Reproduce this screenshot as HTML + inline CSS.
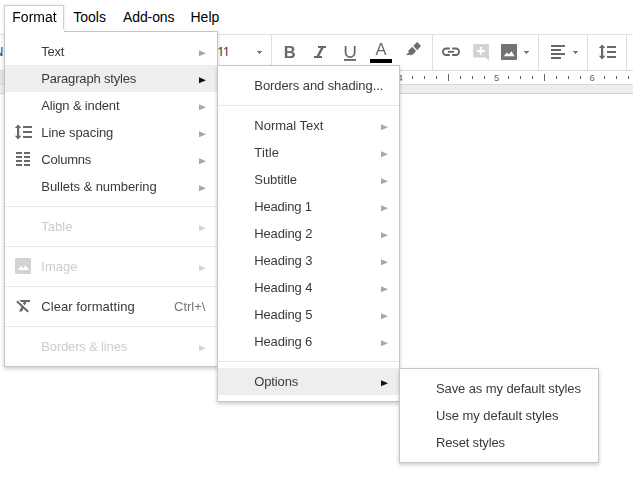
<!DOCTYPE html>
<html>
<head>
<meta charset="utf-8">
<title>Format menu</title>
<style>
html,body{margin:0;padding:0;}
body{width:633px;height:495px;position:relative;overflow:hidden;background:#fff;font-family:"Liberation Sans",Arial,sans-serif;}
.abs{position:absolute;}
/* menubar */
.mb{position:absolute;top:9px;height:16px;line-height:16px;font-size:14px;color:#000;white-space:nowrap;}
#fmtbtn{position:absolute;left:4px;top:5px;width:58px;height:25px;border:1px solid #d0d0d0;border-bottom:none;background:#fff;z-index:20;box-shadow:0 0 3px rgba(0,0,0,.12);clip-path:inset(-4px -5px 0 -5px);}
#fmtcover{position:absolute;left:5px;top:29px;width:59px;height:3px;background:#fff;z-index:21;}
/* toolbar */
#tb{position:absolute;left:0;top:34px;width:633px;height:35px;border-top:1px solid #e0e0e0;border-bottom:1px solid #dcdcdc;box-sizing:content-box;background:#fff;}
.vsep{position:absolute;top:35px;width:1px;height:35px;background:#dedede;}
#ruler{position:absolute;left:0;top:71px;width:633px;height:13px;background:#fff;border-bottom:1px solid #d9d9d9;}
#band{position:absolute;left:0;top:85px;width:633px;height:8px;background:#eee;border-bottom:1px solid #d2d2d2;}
.tick{position:absolute;top:76px;width:1px;height:3px;background:#666;}
.tick.l{top:74px;height:7px;}
.rn{position:absolute;top:72px;font-size:9.3px;line-height:13px;color:#666;width:12px;text-align:center;}
/* menus */
.menu{position:absolute;background:#fff;border:1px solid #c6c6c6;box-shadow:0 2px 4px rgba(0,0,0,.2);box-sizing:border-box;}
.it{position:absolute;left:0;height:27px;line-height:27px;font-size:13px;color:#3a3a3a;white-space:nowrap;}
.it.hl{background:#eee;}
.it.dis{color:#ccc;}
.it span.t{position:absolute;top:0;}
.sep{position:absolute;left:0;height:1px;background:#e6e6e6;}
.acc{position:absolute;top:0;color:#757575;}
svg{position:absolute;overflow:visible;}
.menu,svg{will-change:transform;}
</style>
</head>
<body>

<!-- menubar -->
<div id="fmtbtn"></div>
<div id="fmtcover"></div>
<div class="mb" style="left:12.3px;z-index:30;">Format</div>
<div class="mb" style="left:73.3px;">Tools</div>
<div class="mb" style="left:123px;letter-spacing:-0.1px;">Add-ons</div>
<div class="mb" style="left:190.5px;">Help</div>

<!-- toolbar -->
<div id="tb"></div>
<div class="abs" style="left:-6px;top:44px;font-size:13px;line-height:16px;color:#444;">N</div>
<div class="abs" style="left:217.2px;top:45px;font-size:13px;line-height:16px;color:#444;letter-spacing:-0.8px;clip-path:inset(0 0 5px 0);transform-origin:0 11px;transform:scaleY(1.125);">11</div>
<div class="vsep" style="left:271px"></div>
<div class="vsep" style="left:432px"></div>
<div class="vsep" style="left:538px"></div>
<div class="vsep" style="left:587px"></div>
<div class="vsep" style="left:626px"></div>

<!-- toolbar icons -->
<svg width="633" height="72" style="left:0;top:0" viewBox="0 0 633 72">
  <!-- dropdown arrows -->
  <g fill="#7a7a7a">
    <path d="M257 51h5v1h-1v1h-1v1h-1v-1h-1v-1h-1z"/>
    <path d="M524 51h5v1h-1v1h-1v1h-1v-1h-1v-1h-1z"/>
    <path d="M573 51h5v1h-1v1h-1v1h-1v-1h-1v-1h-1z"/>
  </g>
  <!-- bold -->
  <text x="283.8" y="58" font-family="Liberation Sans, Arial, sans-serif" font-weight="bold" font-size="16.6" fill="#696969">B</text>
  <!-- italic -->
  <path d="M318 46h8v2h-2.4l-4.2 8h2.6v2h-8v-2h2.6l4.2-8h-2.8z" fill="#696969"/>
  <!-- underline -->
  <path d="M345.6 46v6.5a4.55 4.55 0 0 0 9.1 0v-6.5" fill="none" stroke="#696969" stroke-width="1.8"/>
  <rect x="344" y="59" width="12" height="1.9" fill="#696969"/>
  <!-- text colour A -->
  <text x="375.5" y="55" font-family="Liberation Sans, Arial, sans-serif" font-size="16.5" fill="#696969">A</text>
  <rect x="370" y="59" width="22" height="4" fill="#000"/>
  <!-- highlighter -->
  <path d="M417.1 42.1L420.8 46 417.3 49.9 413.5 45.9z M412.2 47L415.9 50.9 412.4 54.8 406.3 54.8 409 52.6 408.6 50.6z" fill="#6c6c6c" stroke="#6c6c6c" stroke-width="0.4" stroke-linejoin="round"/>
  <!-- link -->
  <path d="M449.8 48.5h-3.65a3.25 3.25 0 0 0 0 6.5h3.65 M452.2 48.5h3.65a3.25 3.25 0 0 1 0 6.5h-3.65" fill="none" stroke="#666" stroke-width="1.8"/>
  <rect x="447.8" y="50.9" width="6.2" height="1.8" fill="#666"/>
  <!-- add comment (disabled) -->
  <path d="M473.2 44h15.7v16.8l-3.3-3.2h-12.4z" fill="#d2d2d2"/>
  <path d="M479.8 47h2v2.9h3.2v2h-3.2v2.9h-2v-2.9h-3.1v-2h3.1z" fill="#fff"/>
  <!-- image -->
  <rect x="501" y="44" width="16" height="16" rx="1" fill="#737373"/>
  <path d="M503.6 56.2l3.4-3.7 1.8 2 2.6-3.2 3.3 4.9z" fill="#fff"/>
  <!-- align left -->
  <rect x="551" y="45" width="14" height="2" fill="#696969"/>
  <rect x="551" y="49" width="10" height="2" fill="#696969"/>
  <rect x="551" y="53" width="14" height="2" fill="#696969"/>
  <rect x="551" y="57" width="10" height="2" fill="#696969"/>
  <!-- line spacing -->
  <g fill="#696969">
    <path d="M602.1 44.4l3.3 3.6h-2.2v7.8h2.2l-3.3 3.6-3.3-3.6h2.2v-7.8h-2.2z"/>
    <rect x="607" y="46" width="9" height="2"/>
    <rect x="607" y="51" width="9" height="2"/>
    <rect x="607" y="56" width="9" height="2"/>
  </g>
</svg>

<!-- ruler -->
<div id="ruler"></div>
<div id="band"></div>
<div class="abs" style="left:0;top:71px;width:6px;height:13px;background:#e6e6e6;"></div>
<div id="ticks"></div>
<div class="tick" style="left:412px"></div><div class="tick" style="left:424px"></div><div class="tick" style="left:436px"></div>
<div class="tick l" style="left:448px"></div>
<div class="tick" style="left:460px"></div><div class="tick" style="left:472px"></div><div class="tick" style="left:484px"></div>
<div class="tick" style="left:508px"></div><div class="tick" style="left:520px"></div><div class="tick" style="left:532px"></div>
<div class="tick l" style="left:544px"></div>
<div class="tick" style="left:556px"></div><div class="tick" style="left:568px"></div><div class="tick" style="left:580px"></div>
<div class="tick" style="left:604px"></div><div class="tick" style="left:616px"></div><div class="tick" style="left:628px"></div>
<div class="rn" style="left:394px">4</div>
<div class="rn" style="left:490.5px">5</div>
<div class="rn" style="left:586px">6</div>

<!-- MENU 1 : Format -->
<div class="menu" id="m1" style="left:4px;top:31px;width:214px;height:336px;z-index:10;">
  <div class="it" style="top:6px;width:212px;"><span class="t" style="left:36.3px;letter-spacing:-0.233px">Text</span></div>
  <div class="it hl" style="top:33px;width:212px;"><span class="t" style="left:36.3px;letter-spacing:-0.167px">Paragraph styles</span></div>
  <div class="it" style="top:60px;width:212px;"><span class="t" style="left:36.3px;letter-spacing:-0.154px">Align &amp; indent</span></div>
  <div class="it" style="top:87px;width:212px;"><span class="t" style="left:36.3px;letter-spacing:-0.091px">Line spacing</span></div>
  <div class="it" style="top:114px;width:212px;"><span class="t" style="left:36.3px;letter-spacing:-0.217px">Columns</span></div>
  <div class="it" style="top:141px;width:212px;"><span class="t" style="left:36.3px;letter-spacing:-0.056px">Bullets &amp; numbering</span></div>
  <div class="sep" style="top:174px;width:212px;"></div>
  <div class="it dis" style="top:181px;width:212px;"><span class="t" style="left:36.3px">Table</span></div>
  <div class="sep" style="top:214px;width:212px;"></div>
  <div class="it dis" style="top:221px;width:212px;"><span class="t" style="left:36.3px">Image</span></div>
  <div class="sep" style="top:254px;width:212px;"></div>
  <div class="it" style="top:261px;width:212px;"><span class="t" style="left:36.3px;letter-spacing:0.06px">Clear formatting</span><span class="acc" style="left:169px">Ctrl+\</span></div>
  <div class="sep" style="top:294px;width:212px;"></div>
  <div class="it dis" style="top:301px;width:212px;"><span class="t" style="left:36.3px;letter-spacing:-0.16px">Borders &amp; lines</span></div>
  <svg width="212" height="334" viewBox="5 32 212 334" style="left:0;top:0;">
    <!-- submenu arrows -->
    <g fill="#a6a6a6">
      <polygon points="199,50.3 206,53.2 199,56.2"/>
      <polygon points="199,104.3 206,107.2 199,110.2"/>
      <polygon points="199,131.3 206,134.2 199,137.2"/>
      <polygon points="199,158.3 206,161.2 199,164.2"/>
      <polygon points="199,185.3 206,188.2 199,191.2"/>
    </g>
    <polygon points="199,77.3 206,80.2 199,83.2" fill="#111"/>
    <g fill="#d4d4d4">
      <polygon points="199,225.3 206,228.2 199,231.2"/>
      <polygon points="199,265.3 206,268.2 199,271.2"/>
      <polygon points="199,345.3 206,348.2 199,351.2"/>
    </g>
    <!-- line spacing icon -->
    <g fill="#6a6a6a" transform="translate(-584,80)">
      <path d="M602.1 44.4l3.3 3.6h-2.2v7.8h2.2l-3.3 3.6-3.3-3.6h2.2v-7.8h-2.2z"/>
      <rect x="607" y="46" width="9" height="2"/>
      <rect x="607" y="51" width="9" height="2"/>
      <rect x="607" y="56" width="9" height="2"/>
    </g>
    <!-- columns icon -->
    <g fill="#6a6a6a">
      <rect x="16" y="152" width="6" height="2"/><rect x="24" y="152" width="6" height="2"/>
      <rect x="16" y="156" width="6" height="2"/><rect x="24" y="156" width="6" height="2"/>
      <rect x="16" y="160" width="6" height="2"/><rect x="24" y="160" width="6" height="2"/>
      <rect x="16" y="164" width="6" height="2"/><rect x="24" y="164" width="6" height="2"/>
    </g>
    <!-- image icon disabled -->
    <rect x="15" y="258" width="16" height="16" rx="1.2" fill="#d3d3d3"/>
    <path d="M17.8 270l3-4 2.1 2.6 2.6-3.4 3.6 4.8z" fill="#fff"/>
    <!-- clear formatting icon -->
    <g>
      <rect x="18" y="300" width="12" height="2" fill="#6a6a6a"/>
      <polygon points="23.7,302 26.5,302 22,311.6 19.1,311.6" fill="#6a6a6a"/>
      <line x1="15.60" y1="298.06" x2="31.42" y2="312.90" stroke="#fff" stroke-width="2"/>
      <line x1="16.9" y1="301.2" x2="28.2" y2="311.8" stroke="#6a6a6a" stroke-width="2"/>
    </g>
  </svg>
</div>

<!-- MENU 2 : Paragraph styles -->
<div class="menu" id="m2" style="left:217px;top:65px;width:183px;height:337px;z-index:11;">
  <div class="it" style="top:6px;width:181px;"><span class="t" style="left:36.3px;letter-spacing:-0.086px">Borders and shading...</span></div>
  <div class="sep" style="top:39px;width:181px;"></div>
  <div class="it" style="top:46px;width:181px;"><span class="t" style="left:36.3px">Normal Text</span></div>
  <div class="it" style="top:73px;width:181px;"><span class="t" style="left:36.3px;letter-spacing:0.125px">Title</span></div>
  <div class="it" style="top:100px;width:181px;"><span class="t" style="left:36.3px;letter-spacing:-0.086px">Subtitle</span></div>
  <div class="it" style="top:127px;width:181px;"><span class="t" style="left:36.3px;letter-spacing:-0.188px">Heading 1</span></div>
  <div class="it" style="top:154px;width:181px;"><span class="t" style="left:36.3px;letter-spacing:-0.15px">Heading 2</span></div>
  <div class="it" style="top:181px;width:181px;"><span class="t" style="left:36.3px;letter-spacing:-0.15px">Heading 3</span></div>
  <div class="it" style="top:208px;width:181px;"><span class="t" style="left:36.3px;letter-spacing:-0.15px">Heading 4</span></div>
  <div class="it" style="top:235px;width:181px;"><span class="t" style="left:36.3px;letter-spacing:-0.15px">Heading 5</span></div>
  <div class="it" style="top:262px;width:181px;"><span class="t" style="left:36.3px;letter-spacing:-0.163px">Heading 6</span></div>
  <div class="sep" style="top:295px;width:181px;"></div>
  <div class="it hl" style="top:302px;width:181px;"><span class="t" style="left:36.3px;letter-spacing:-0.133px">Options</span></div>
  <svg width="181" height="335" viewBox="218 66 181 335" style="left:0;top:0;">
    <g fill="#a6a6a6">
      <polygon points="381,124.3 388,127.2 381,130.2"/>
      <polygon points="381,151.3 388,154.2 381,157.2"/>
      <polygon points="381,178.3 388,181.2 381,184.2"/>
      <polygon points="381,205.3 388,208.2 381,211.2"/>
      <polygon points="381,232.3 388,235.2 381,238.2"/>
      <polygon points="381,259.3 388,262.2 381,265.2"/>
      <polygon points="381,286.3 388,289.2 381,292.2"/>
      <polygon points="381,313.3 388,316.2 381,319.2"/>
      <polygon points="381,340.3 388,343.2 381,346.2"/>
    </g>
    <polygon points="381,380.3 388,383.2 381,386.2" fill="#111"/>
  </svg>
</div>

<!-- MENU 3 : Options -->
<div class="menu" id="m3" style="left:399px;top:368px;width:200px;height:95px;z-index:12;">
  <div class="it" style="top:6px;width:198px;"><span class="t" style="left:36px;letter-spacing:-0.1px">Save as my default styles</span></div>
  <div class="it" style="top:33px;width:198px;"><span class="t" style="left:36px;letter-spacing:-0.055px">Use my default styles</span></div>
  <div class="it" style="top:60px;width:198px;"><span class="t" style="left:36px;letter-spacing:-0.164px">Reset styles</span></div>
</div>

</body>
</html>
